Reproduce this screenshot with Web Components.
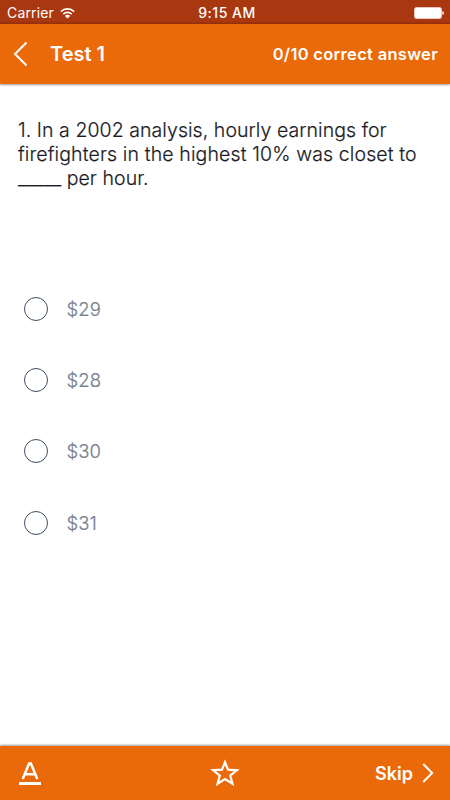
<!DOCTYPE html>
<html lang="en">
<head>
<meta charset="utf-8">
<title>Test 1</title>
<style>
html,body{margin:0;height:100%}
body{background:#fff;font-family:Inter,"Liberation Sans",sans-serif;overflow:hidden}
</style>
</head>
<body>
<quiz-screen></quiz-screen>
<script>
const define = (name, html) => customElements.define(name, class extends HTMLElement {
  constructor() {
    super();
    const t = document.createElement('template');
    t.innerHTML = html;
    this.attachShadow({mode: 'open'}).append(t.content.cloneNode(true));
  }
});

define('status-bar', `
<style>
:host{display:grid;grid-template-columns:1fr auto 1fr;align-items:center;height:24px;flex:none;box-sizing:border-box;padding:0 6px 0 7px;background:linear-gradient(#a9370f 21px,#972f0b);color:#fff;font-size:14px;line-height:25px}
.left{display:flex;align-items:center;gap:6px;letter-spacing:.15px}
.time{font-weight:500;letter-spacing:.5px;padding-left:3px}
svg{display:block}
.battery{justify-self:end}
</style>
<div class="left"><span>Carrier</span>
<svg width="15" height="12" viewBox="0 0 15 12" fill="none" stroke="#fff" stroke-width="1.7"><path d="M.9 4.6a9.4 9.4 0 0 1 13.2 0M3.3 7.1a6 6 0 0 1 8.4 0"/><path d="M7.5 11.6 4.9 9a3.7 3.7 0 0 1 5.2 0z" fill="#fff" stroke="none"/></svg></div>
<span class="time">9:15 AM</span>
<svg class="battery" width="30" height="12" viewBox="0 0 30 12"><rect x=".5" y=".5" width="27" height="11" rx="2" fill="#fff" stroke="#e9c7bd"/><path d="M28.4 4q1.6.6 1.6 2t-1.6 2z" fill="#fff"/></svg>`);

define('top-bar', `
<style>
:host{display:flex;align-items:center;height:60px;flex:none;box-sizing:border-box;padding:0 12px 0 13px;background:#ea6909;color:#fff;font-weight:600;box-shadow:0 1px 2px rgba(0,0,0,.4);z-index:1}
svg{display:block;margin-right:22px}
.title{font-size:20px}
.score{margin-left:auto;font-size:16.5px;letter-spacing:.3px}
</style>
<svg width="15" height="26" viewBox="0 0 15 26" fill="none" stroke="#fff" stroke-width="2"><path d="M13.5 1.5 2 13l11.5 11.5"/></svg>
<span class="title"><slot name="title"></slot></span>
<span class="score"><slot name="score"></slot></span>`);

define('quiz-question', `
<style>
:host{display:block;padding:34px 18px 0;height:155px;color:#1c1c28;font-size:19.5px;font-weight:300;-webkit-text-stroke:.2px;line-height:24px;white-space:nowrap}
div{letter-spacing:.06px}
.wide{letter-spacing:.12px}
.blank{letter-spacing:-.1px}
</style>
<div>1. In a 2002 analysis, hourly earnings for</div>
<div class="wide">firefighters in the highest 10% was closet to</div>
<div><span class="blank">_____</span> per hour.</div>`);

define('answer-option', `
<style>
:host{display:flex;align-items:center;gap:18.5px;height:71.4px;padding-left:24px;color:#75818e;font-size:18.5px;font-weight:300;-webkit-text-stroke:.2px;letter-spacing:.1px}
i{box-sizing:border-box;width:24px;height:24px;border:1px solid #3d4e61;border-radius:50%}
</style><i></i><span><slot></slot></span>`);

define('bottom-bar', `
<style>
:host{display:grid;grid-template-columns:1fr auto 1fr;align-items:center;margin-top:auto;height:54px;flex:none;box-sizing:border-box;padding:0 16px 0 19px;background:#ea6909;color:#fff;box-shadow:0 -1px 2px rgba(0,0,0,.4)}
svg{display:block}
.star{margin-right:3px}
.skip{display:flex;align-items:center;justify-self:end;gap:9px;font-size:18px;font-weight:600}
</style>
<svg width="22" height="30" viewBox="0 0 22 30" fill="none" stroke="#fff"><path d="M3.7 20.9 10.1 5.4h1.8L18.3 20.9M6 16.2h10" stroke-width="2.5"/><path d="M0 25.5h22" stroke-width="3"/></svg>
<svg class="star" width="30" height="28" viewBox="0 0 30 28" fill="none" stroke="#fff" stroke-width="2.2"><path d="m15 3.2 3 7.4 8.9.5-6.7 5.5 2.3 8.2-7.5-4.8-7.5 4.8 2.3-8.2-6.7-5.5 8.9-.5z"/></svg>
<span class="skip"><span>Skip</span><svg width="12" height="20" viewBox="0 0 12 20" fill="none" stroke="#fff" stroke-width="2"><path d="m1.2 1 9 9-9 9"/></svg></span>`);

define('quiz-screen', `
<style>
:host{display:flex;flex-direction:column;width:450px;height:800px;background:#fff}
</style>
<status-bar></status-bar>
<top-bar><span slot="title">Test 1</span><span slot="score">0/10 correct answer</span></top-bar>
<quiz-question></quiz-question>
<answer-option>$29</answer-option>
<answer-option>$28</answer-option>
<answer-option>$30</answer-option>
<answer-option>$31</answer-option>
<bottom-bar></bottom-bar>`);
</script>
</body>
</html>
